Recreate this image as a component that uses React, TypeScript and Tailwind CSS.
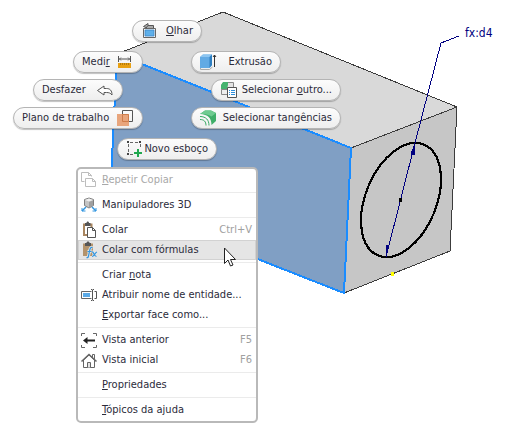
import type { ReactNode } from "react";
import clsx from "clsx";

/* ── Icons ── */

function LookAtIcon() {
  return (
    <svg width="18" height="18" viewBox="0 0 18 18" fill="none">
      <path d="M2.500 6.500h12v9h-12z" fill="#f4f4f4" stroke="#666" />
      <path d="M4 8h9v6H4z" fill="#5fb0ea" stroke="#3b87c8" strokeWidth=".8" />
      <path d="M12.500 6V3.500H7V1.500L2.500 4.500 6 6M7 3.500L5 6" fill="#aaa" stroke="#555" />
    </svg>
  );
}

function MeasureIcon() {
  return (
    <svg width="18" height="18" viewBox="0 0 18 18" fill="none">
      <path d="M2.500 3v6M14.500 3v6M3 6h11" stroke="#555" />
      <path d="M5 4.500L3.500 6 5 7.500M12 4.500L13.500 6 12 7.500" stroke="#555" strokeWidth=".8" />
      <path d="M2 10h13v5H2z" fill="#e8a013" />
      <path d="M4.500 10v2M6.500 10v2M8.500 10v2M10.500 10v2M12.500 10v2" stroke="#9c6a0c" strokeWidth=".7" />
    </svg>
  );
}

function UndoIcon() {
  return (
    <svg width="18" height="18" viewBox="0 0 18 18" fill="none">
      <path
        d="M1.500 9.500L8 5v2.500h2.500c3.500 0 5.500 2 5.500 6.500-1.500-2-3-2.500-5.500-2.500H8V14z"
        fill="#fff"
        stroke="#555"
        strokeLinejoin="round"
      />
    </svg>
  );
}

function WorkPlaneIcon() {
  return (
    <svg width="18" height="18" viewBox="0 0 18 18" fill="none">
      <path d="M6.500 5V1.500h10v11H13" stroke="#555" />
      <path d="M1 5h12v12H1z" fill="#e8a57c" />
      <path d="M6.500 5.500h6v7h-6z" fill="#e8a57c" stroke="#cf7c4a" />
    </svg>
  );
}

function NewSketchIcon() {
  return (
    <svg width="18" height="18" viewBox="0 0 18 18" fill="none">
      <path d="M2.500 4v9M14.500 4v5M4 2.500h9M4 14.500h4" stroke="#666" strokeDasharray="3 2" />
      <path d="M1 1h2v2H1zM13 1h2v2h-2zM1 13h2v2H1z" fill="#444" />
      <path d="M12 9v8M8 13h8" stroke="#1fa84e" strokeWidth="2" />
    </svg>
  );
}

function ExtrudeIcon() {
  return (
    <svg width="18" height="18" viewBox="0 0 18 18" fill="none">
      <path d="M.500 14v2.500h9l3-2.500" fill="#eee" stroke="#aaa" />
      <path d="M0 4l3-2.500h9V12l-2.500 3H0z" fill="#62aae4" />
      <path d="M0 4l3-2.500h9L9.500 4z" fill="#8cc5f1" />
      <path d="M9.500 4L12 1.500V12l-2.500 3z" fill="#2f7fc1" />
      <path d="M14.500 2v12M13 4l1.500-2L16 4" stroke="#333" />
    </svg>
  );
}

function SelectOtherIcon() {
  return (
    <svg width="18" height="18" viewBox="0 0 18 18" fill="none">
      <path d="M1.500 4.500l2-3h10v7h-12z" fill="#e4e4e4" stroke="#888" />
      <path d="M1 4l2-3h5v3L7 8H1z" fill="#45b36f" />
      <path d="M1.500 8.500h6v5h-6z" fill="#eee" stroke="#888" />
      <path d="M7.500 6.500h9v10h-9z" fill="#fff" stroke="#555" />
      <path d="M9 9.500h1M9 11.500h1M9 13.500h1M11 9.500h4M11 11.500h4M11 13.500h4" stroke="#2f8fdb" />
    </svg>
  );
}

function TangentIcon() {
  return (
    <svg width="18" height="18" viewBox="0 0 18 18" fill="none">
      <path d="M0 5l5-3.500h6L16 4v8l-4.500 4C11.500 9 8 5.500 0 5z" fill="#3fae69" />
      <path d="M0 5l5-3.500h6L16 4l-4.500 3.500C8.500 5.500 5 5 0 5z" fill="#6fcb90" />
      <path d="M0 8c5.500 0 8.500 3 8.500 8.500" stroke="#f6f6f6" strokeWidth="3" />
      <path d="M0 7.500c6 0 9 3.500 9 9M0 10.500c4 0 6 2 6 6" stroke="#36a862" />
    </svg>
  );
}

function RepeatIcon() {
  return (
    <svg width="18" height="18" viewBox="0 0 18 18" fill="none" stroke="#bdbdbd">
      <path d="M4.500 10.500h-3v-9h7l3 3v1M8.500 1.500v3h3" />
      <path d="M5.500 7.500h7l3 3v5h-10zM12.500 7.500v3h3" fill="#fff" />
    </svg>
  );
}

function ManipulatorIcon() {
  return (
    <svg width="18" height="18" viewBox="0 0 18 18" fill="none">
      <path d="M4.500 3.500L9 2l4.500 1.500v6L9 12 4.500 9.500z" fill="#c4c4c4" stroke="#808080" />
      <path d="M5 4l4-1.500L13 4 9 5.500z" fill="#f0f0f0" />
      <path d="M9 6v5.500l4-2V4.500z" fill="#a0a0a0" />
      <path d="M6 11l-4 4M12 11l4 4" stroke="#3296e0" strokeWidth="1.500" />
      <path d="M2 12v3h3.500M16 12v3h-3.500" stroke="#3296e0" />
    </svg>
  );
}

function PasteIcon() {
  return (
    <svg width="18" height="18" viewBox="0 0 18 18" fill="none">
      <path d="M4 3.500h7.500V14H4z" fill="#fff" stroke="#a98660" strokeWidth="2" />
      <path d="M5 2h1.500c0-1 .500-1.500 1.200-1.500S9 1 9 2h1.500v3H5z" fill="#555" />
      <path d="M7.500 6.500h5l3 3v7h-8z" fill="#fff" stroke="#555" />
      <path d="M12.500 6.500v3h3" stroke="#555" />
    </svg>
  );
}

function PasteFormulaIcon() {
  return (
    <svg width="18" height="18" viewBox="0 0 18 18" fill="none">
      <path d="M3 2.500h10V15H3z" fill="#b3936c" />
      <path d="M5 2h1.500c0-1 .500-1.500 1.500-1.500S9.500 1 9.500 2H11v3H5z" fill="#555" />
      <path
        d="M12.500 6.500c-2-.500-2.500 1-3 4l-1 4.500c-.300 1.500-1 2-2 1.500M7.500 10.500h4M12 11c2-.500 2 4.500 4.500 4.500M17 11c-2 .500-3 4.500-5 4.500"
        stroke="#e5e5e5"
        strokeWidth="3"
      />
      <path
        d="M12.500 6.500c-2-.500-2.500 1-3 4l-1 4.500c-.300 1.500-1 2-2 1.500M7.500 10.500h4M12 11c2-.500 2 4.500 4.500 4.500M17 11c-2 .500-3 4.500-5 4.500"
        stroke="#3296e0"
        strokeWidth="1.200"
      />
    </svg>
  );
}

function RenameIcon() {
  return (
    <svg width="18" height="18" viewBox="0 0 18 18" fill="none">
      <path d="M11.500 5.500h-10v7h10" fill="#fff" stroke="#666" />
      <path d="M3 7h7v4H3z" fill="#5aa9e6" />
      <path d="M11 3.500h1l.500.500.500-.500h1M12.500 4v10M11 14.500h1l.500-.500.500.500h1M14.500 5.500h2v7h-2" stroke="#555" />
    </svg>
  );
}

function PreviousViewIcon() {
  return (
    <svg width="18" height="18" viewBox="0 0 18 18" fill="none">
      <path d="M1.500 5V2.500H5M13 2.500h3.500V5M1.500 14v2.500H5M13 16.500h3.500V14" stroke="#666" />
      <path d="M3 9.500L7.500 6v2.500H15v2H7.500V13z" fill="#222" />
    </svg>
  );
}

function HomeIcon() {
  return (
    <svg width="18" height="18" viewBox="0 0 18 18" fill="none">
      <path d="M12.500 3.500h2v5h-2z" fill="#fff" stroke="#666" />
      <path d="M3.500 9v7.500h11V9L9 4z" fill="#fff" stroke="#666" />
      <path d="M1.500 10.500L9 3.500l7.500 7" stroke="#666" strokeWidth="1.600" />
      <path d="M7.500 16.500v-5h3v5" fill="#e4e4e4" stroke="#666" />
    </svg>
  );
}

/* ── Model view ── */

function Model() {
  return (
    <svg className="block" width="521" height="430" viewBox="0 0 521 430" fill="none" shapeRendering="crispEdges">
      <path d="M223 12L457 107 351 148 117 54z" fill="#d9d9d9" />
      <path d="M351 148L457 107 450 251 344 293z" fill="#c6c6c6" />
      <path d="M117 54L351 148 344 293 110 201z" fill="#809fc4" />
      <path d="M117 54L223 12 457 107 450 251 344 293M351 148L457 107" stroke="#3c3c3c" />
      <path d="M117 54L351 148 344 293 110 201z" stroke="#1a8cff" strokeWidth="2" />
      <ellipse cx="401" cy="200" rx="35.400" ry="60" transform="rotate(22.500 401 200)" stroke="#000" strokeWidth="2.200" />
      <path d="M459 36L441 43 415 143 386 257" stroke="#000080" />
      <path d="M415 144l-4 10 3 1zM386 256l0-11 3 1z" fill="#000080" stroke="#000080" />
      <path d="M399 198h3v4h-3z" fill="#000" />
      <path d="M391 272h3v4h-3z" fill="#ffff00" />
      <text x="465" y="37" className="fill-[#000080] text-[12px]">
        fx:d4
      </text>
    </svg>
  );
}

/* ── Marking menu ── */

type PillProps = {
  icon: ReactNode;
  iconRight?: boolean;
  place: string;
  children: ReactNode;
};

function Pill({ icon, iconRight, place, children }: PillProps) {
  return (
    <button
      type="button"
      className={clsx(
        "absolute flex h-[22px] items-center justify-between rounded-full border border-[#b4b4b4] bg-linear-to-b from-[#fcfcfc] to-[#eeeeee] px-2 whitespace-nowrap shadow-[0_1px_1px_rgba(0,0,0,0.25)]",
        iconRight && "flex-row-reverse",
        place,
      )}
    >
      <span className="shrink-0">{icon}</span>
      <span>{children}</span>
    </button>
  );
}

function MarkingMenu() {
  return (
    <nav aria-label="Menu radial">
      <Pill icon={<LookAtIcon />} place="left-[132px] top-[20px] w-[70px]"><u>O</u>lhar</Pill>
      <Pill icon={<MeasureIcon />} iconRight place="left-[73px] top-[51px] w-[70px]">Medi<u>r</u></Pill>
      <Pill icon={<ExtrudeIcon />} place="left-[191px] top-[51px] w-[90px]">Extrusão</Pill>
      <Pill icon={<UndoIcon />} iconRight place="left-[33px] top-[79px] w-[90px]">Desfazer</Pill>
      <Pill icon={<SelectOtherIcon />} place="left-[211px] top-[79px] w-[130px]">Selecionar <u>o</u>utro...</Pill>
      <Pill icon={<WorkPlaneIcon />} iconRight place="left-[13px] top-[107px] w-[130px]">Plano de trabalho</Pill>
      <Pill icon={<TangentIcon />} place="left-[191px] top-[107px] w-[150px]">Selecionar tangências</Pill>
      <Pill icon={<NewSketchIcon />} place="left-[117px] top-[138px] w-[100px]">Novo esboço</Pill>
    </nav>
  );
}

/* ── Context menu ── */

type ItemProps = {
  icon?: ReactNode;
  shortcut?: string;
  active?: boolean;
  disabled?: boolean;
  children: ReactNode;
};

function Item({ icon, shortcut, active, disabled, children }: ItemProps) {
  return (
    <button
      type="button"
      role="menuitem"
      disabled={disabled}
      className={clsx(
        "flex h-5 w-full items-center gap-1 pr-1 pl-[2px] text-left whitespace-nowrap",
        active && "bg-[#e5e5e5] outline outline-[#d2d2d2] -outline-offset-1",
        disabled && "text-[#a8a8a8]",
      )}
    >
      <span className="w-[18px] shrink-0">{icon}</span>
      <span className="flex-1">{children}</span>
      {shortcut && <span className="text-[#a0a0a0]">{shortcut}</span>}
    </button>
  );
}

function Separator() {
  return <hr className="my-[2px] border-t border-[#ebebeb]" />;
}

function ContextMenu() {
  return (
    <div
      role="menu"
      className="absolute top-[167px] left-[76px] w-[182px] rounded-[5px] border-2 border-[#b9b9b9] bg-white py-px"
    >
      <Item icon={<RepeatIcon />} disabled><u>R</u>epetir Copiar</Item>
      <Separator />
      <Item icon={<ManipulatorIcon />}>Manipuladores 3D</Item>
      <Separator />
      <Item icon={<PasteIcon />} shortcut="Ctrl+V">Colar</Item>
      <Item icon={<PasteFormulaIcon />} active>Colar com fórmulas</Item>
      <Separator />
      <Item>Criar <u>n</u>ota</Item>
      <Item icon={<RenameIcon />}>Atribuir nome de entidade...</Item>
      <Item><u>E</u>xportar face como...</Item>
      <Separator />
      <Item icon={<PreviousViewIcon />} shortcut="F5">Vista anterior</Item>
      <Item icon={<HomeIcon />} shortcut="F6">Vista inicial</Item>
      <Separator />
      <Item><u>P</u>ropriedades</Item>
      <Separator />
      <Item><u>T</u>ópicos da ajuda</Item>
    </div>
  );
}

function Cursor() {
  return (
    <svg className="absolute top-[247px] left-[224px]" width="13" height="20" viewBox="0 0 13 20">
      <path
        d="M.500 1v15.500l3.500-3.500 2.500 6 2.500-1-2.500-5.500h5z"
        fill="#fff"
        stroke="#222"
      />
    </svg>
  );
}

export default function App() {
  return (
    <main className="relative min-h-screen overflow-hidden bg-white font-['DejaVu_Sans_Condensed','DejaVu_Sans',sans-serif] text-[11px] leading-4 text-[#2b2b3a]">
      <Model />
      <MarkingMenu />
      <ContextMenu />
      <Cursor />
    </main>
  );
}
